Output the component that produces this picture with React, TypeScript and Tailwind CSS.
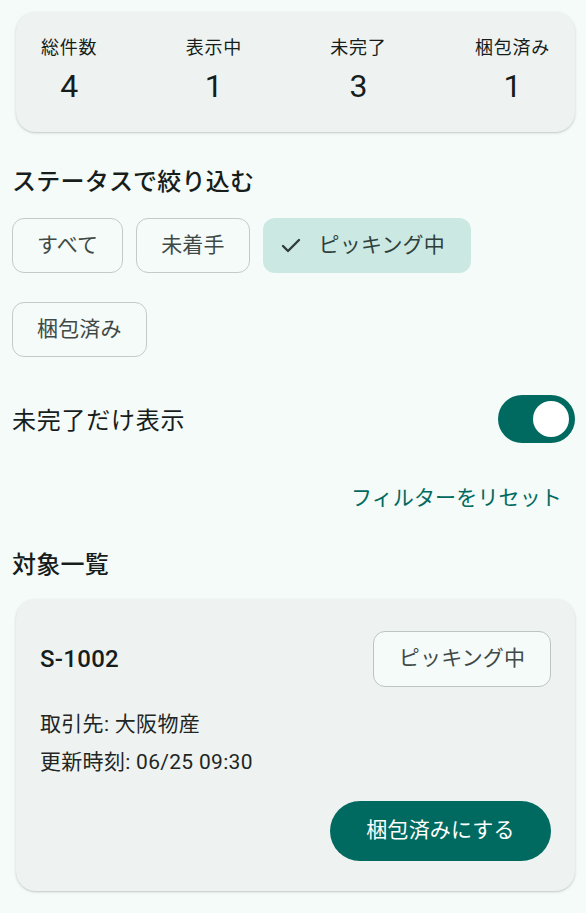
import { Check } from "lucide-react";

const stats = [
  { label: "総件数", value: 4 },
  { label: "表示中", value: 1 },
  { label: "未完了", value: 3 },
  { label: "梱包済み", value: 1 },
];

const filters = [
  { label: "すべて", selected: false },
  { label: "未着手", selected: false },
  { label: "ピッキング中", selected: true },
  { label: "梱包済み", selected: false },
];

function StatCard() {
  return (
    <div className="ml-[4px] rounded-[20px] bg-[#eef3f1] px-[25px] pt-[24px] pb-[26px] shadow-[0_1px_3px_rgba(0,0,0,0.16),0_1px_1px_rgba(0,0,0,0.06)]">
      <div className="flex justify-between">
        {stats.map((s) => (
          <div key={s.label} className="flex flex-col items-center">
            <span className="text-[18px] leading-[24px] tracking-[0.75px] text-[#171d1b]">{s.label}</span>
            <span className="mt-[6px] text-[32px] leading-[40px] text-[#171d1b]">{s.value}</span>
          </div>
        ))}
      </div>
    </div>
  );
}

function FilterChip({ label, selected }: { label: string; selected: boolean }) {
  if (selected) {
    return (
      <button className="flex h-[55px] items-center gap-[16px] rounded-[12px] bg-[#cce8e2] pl-[16px] pr-[26px] text-[21px] tracking-[0.15px] text-[#2f3f3b]">
        <Check className="h-[24px] w-[24px] text-[#2f3d3a]" strokeWidth={2.4} />
        {label}
      </button>
    );
  }
  return (
    <button className="flex h-[55px] items-center rounded-[12px] border border-[#c3cbc8] px-[24px] text-[21px] tracking-[0.15px] text-[#3f4946]">
      {label}
    </button>
  );
}

function Toggle() {
  return (
    <div className="flex h-[48px] w-[77px] items-center justify-end rounded-full bg-[#006a60] pr-[6px]">
      <div className="h-[36px] w-[36px] rounded-full bg-white" />
    </div>
  );
}

function ShipmentCard() {
  return (
    <div className="ml-[4px] mt-[18px] rounded-[20px] bg-[#eef3f1] px-[24px] pt-[32px] pb-[30px] shadow-[0_1px_3px_rgba(0,0,0,0.16),0_1px_1px_rgba(0,0,0,0.06)]">
      <div className="flex items-center justify-between">
        <span className="text-[24px] font-medium tracking-[0.3px] text-[#171d1b]">S-1002</span>
        <button className="flex h-[56px] w-[178px] items-center justify-center rounded-[12px] border border-[#bcc5c2] bg-[#f4fbf8] text-[21px] tracking-[0.15px] text-[#3f4946]">
          ピッキング中
        </button>
      </div>
      <div className="mt-[22px] flex flex-col gap-[8px] text-[21px] leading-[30px] tracking-[0.3px] text-[#1f2624]">
        <span>取引先: 大阪物産</span>
        <span>更新時刻: 06/25 09:30</span>
      </div>
      <div className="mt-[24px] flex justify-end">
        <button className="h-[60px] w-[221px] rounded-full bg-[#006a60] text-[21px] tracking-[0.15px] text-white">
          梱包済みにする
        </button>
      </div>
    </div>
  );
}

export default function App() {
  return (
    <div className="min-h-[913px] bg-[#f4fbf8] pl-[12px] pr-[11px] pt-[12px] font-['Roboto','Noto_Sans_CJK_JP',sans-serif]">
      <StatCard />

      <h2 className="mt-[34px] text-[24px] leading-[32px] font-medium tracking-[0.225px] text-[#171d1b]">ステータスで絞り込む</h2>

      <div className="mt-[20px] flex flex-wrap gap-x-[13px] gap-y-[29px]">
        {filters.map((f) => (
          <FilterChip key={f.label} label={f.label} selected={f.selected} />
        ))}
      </div>

      <div className="mt-[38px] flex items-center justify-between">
        <span className="pt-[3px] text-[24px] tracking-[0.75px] text-[#171d1b]">未完了だけ表示</span>
        <Toggle />
      </div>

      <div className="mt-[40px] flex justify-end pr-[13px]">
        <button className="text-[21px] leading-[30px] tracking-[0.15px] text-[#006a60]">フィルターをリセット</button>
      </div>

      <h2 className="mt-[36px] text-[24px] leading-[32px] font-medium tracking-[0.225px] text-[#171d1b]">対象一覧</h2>

      <ShipmentCard />
    </div>
  );
}
